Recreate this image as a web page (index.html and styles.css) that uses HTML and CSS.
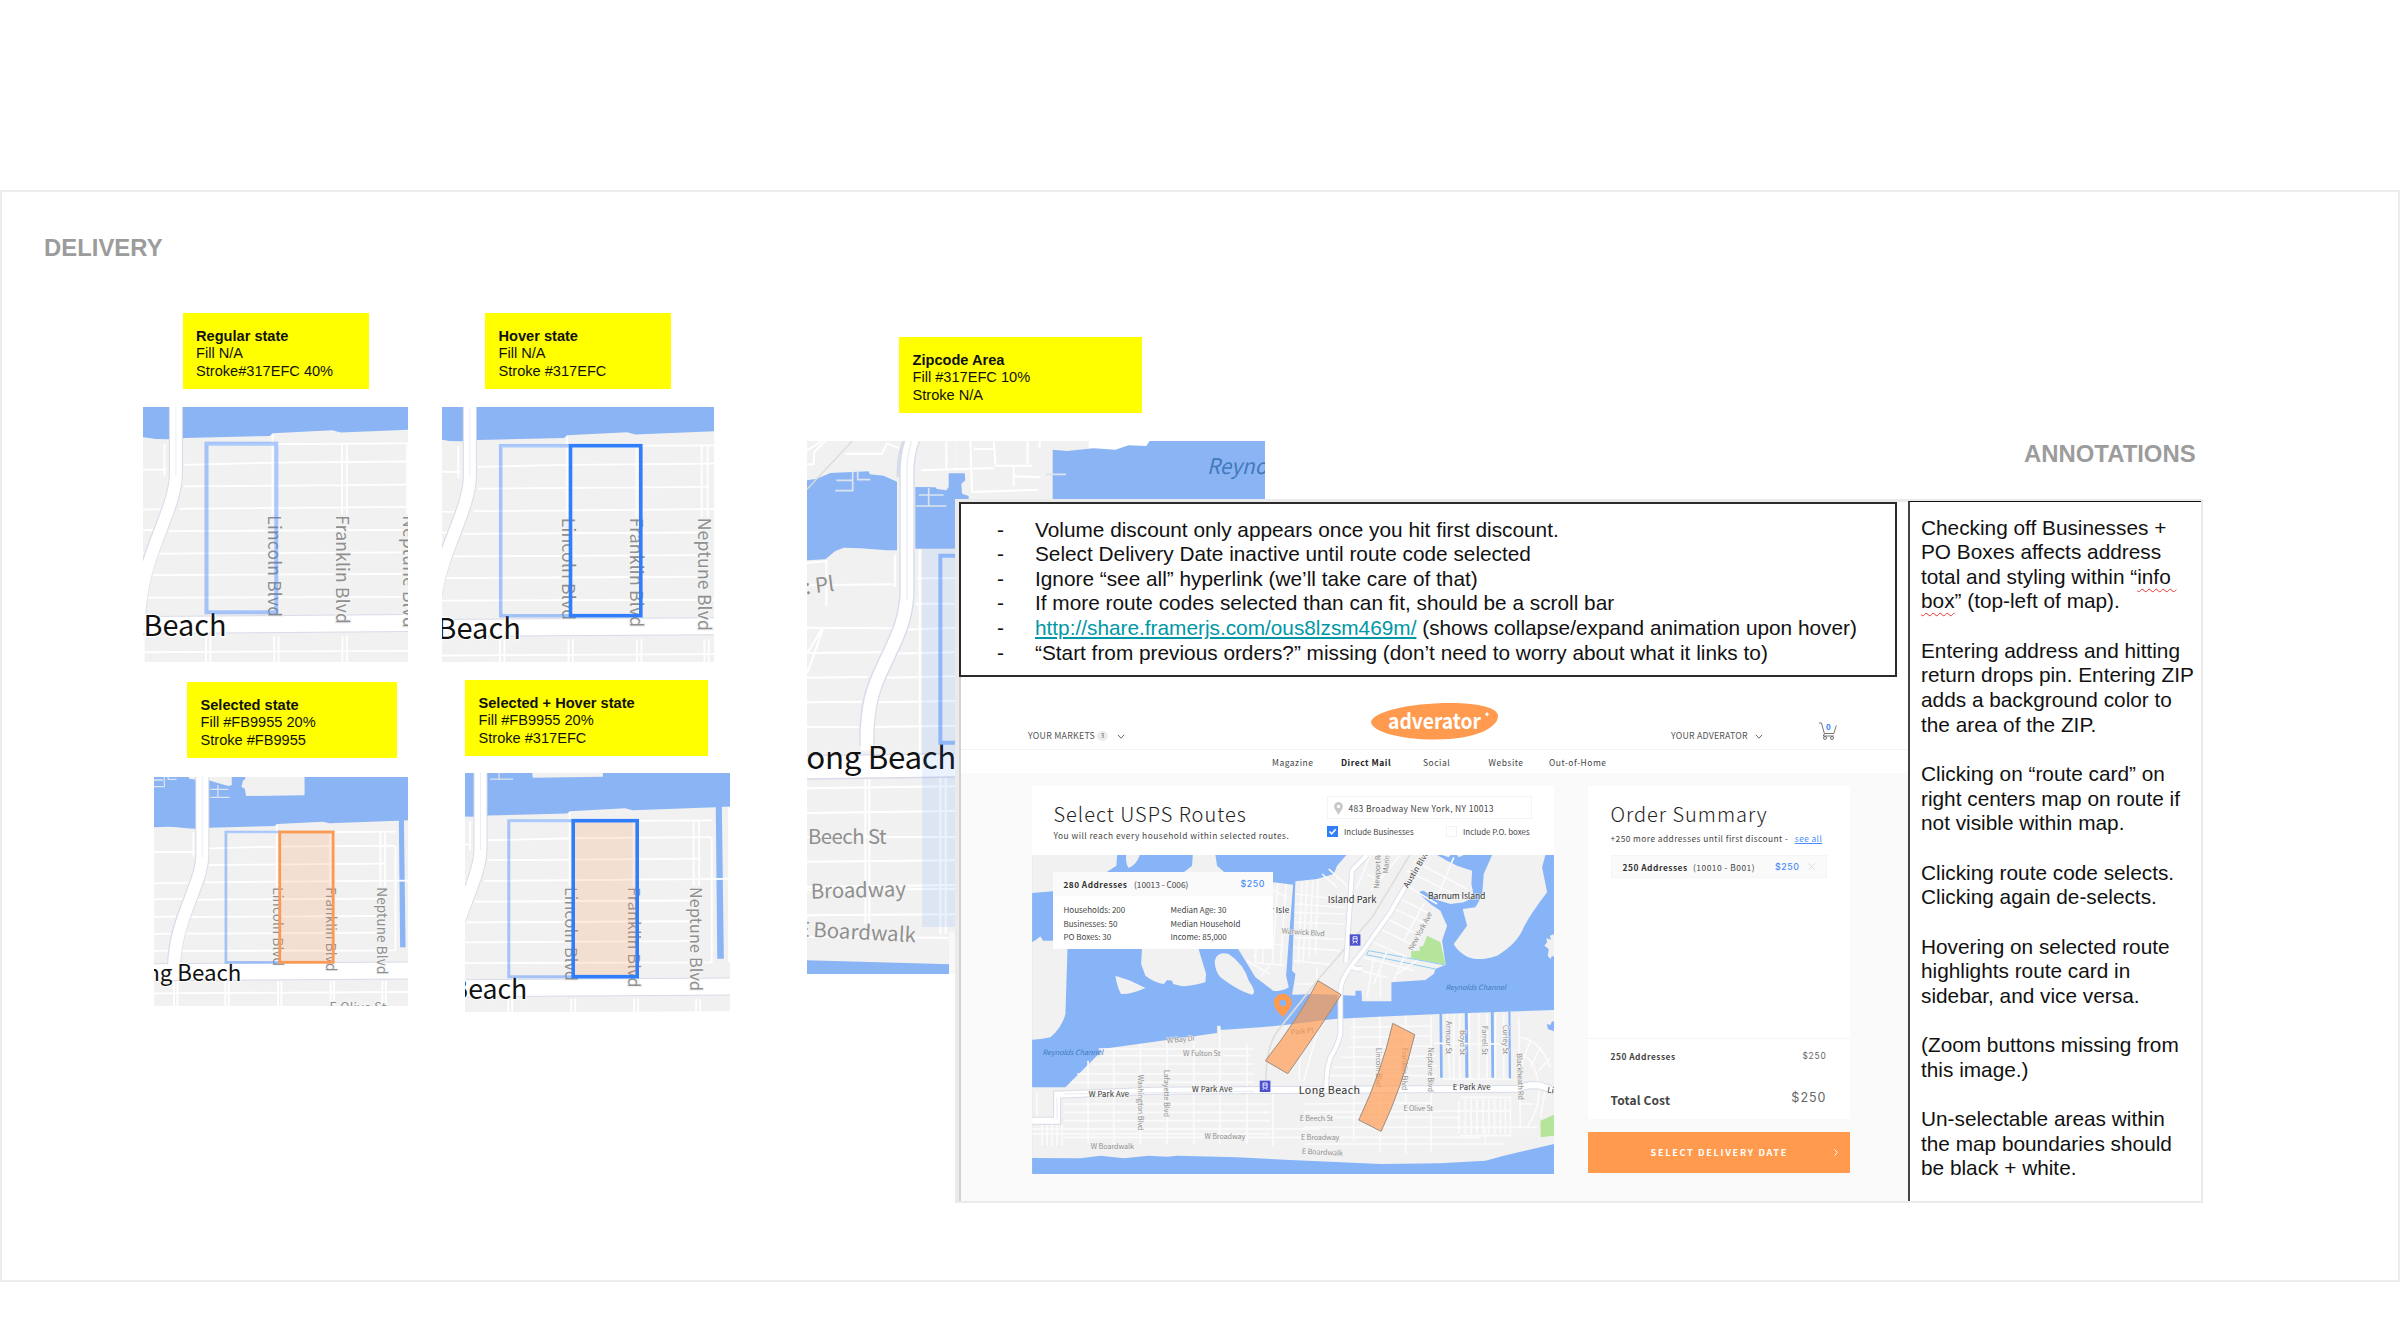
FILE: index.html
```html
<!DOCTYPE html>
<html lang="en">
<head>
<meta charset="utf-8">
<title>Delivery – annotations</title>
<link rel="stylesheet" href="styles.css">
</head>
<body>
<svg class="defs" width="0" height="0" aria-hidden="true">
  <defs>
    <symbol id="streets" overflow="visible">
      <g class="map-shapes" transform="matrix(.4209 0 0 .3333 -54 -107)">
        <rect class="land" x="0" y="200" width="900" height="1000"/>
        <path class="water" d="M100 200H800V446L740 450 708 452 545 460 530 455 420 462 415 468 258 473 228 476 205 475Q165 465 100 476Z"/>
        <path class="land" d="M345 300H486V376L347 378 344 356 336 350 340 331 345 328ZM258 300H313V345L306 348 290 343 258 331ZM205 300H232V330L212 326Z"/>
        <path class="jetty" d="M262 358H305M262 382H308M280 345V384M128 350H153V321M128 330H150M162 321V328H182"/>
        <path class="water" d="M710 448H722L726 832H713Z"/>
        <path class="street" d="M128 546H225M128 640L215 638M128 688L208 686M128 741L195 739M128 792L182 791M128 843L175 842M299 488L703 485M258 535L420 530 700 527M258 585L680 581M250 637L800 631M230 689L672 686M212 741L672 738M200 791L672 788M190 843L702 841M222 487V560M420 465V650M427 487V650M547 487V650M556 487V650M666 487V650M677 487V650M702 527V841M736 452V841M128 970L740 966"/>
        <path class="street" d="M176 932V1020M184 932V1020M298 932V1020M306 932V1020M423 932V1020M431 932V1020M548 932V1020M556 932V1020M671 932V1020M679 932V1020"/>
        <path class="case" d="M243 200V560C240 650 177 750 176 885" style="stroke-width:14"/>
        <path class="case" d="M100 907L800 901" style="stroke-width:18"/>
        <path class="road" d="M243 200V560C240 650 177 750 176 895" style="stroke-width:12"/>
        <path class="road" d="M100 907L800 901" style="stroke-width:16"/>
        <path class="vein" d="M243 300V560"/>
      </g>
      <g class="lbl">
        <text transform="translate(119 110.3) rotate(90)" font-size="13.5" textLength="78.7">Lincoln Blvd</text>
        <text transform="translate(171.6 110.3) rotate(90)" font-size="13.5" textLength="84">Franklin Blvd</text>
        <text transform="translate(223.4 110.3) rotate(90)" font-size="13.5" textLength="87">Neptune Blvd</text>
        <text x="175.4" y="235" font-size="12.5" textLength="57">E Olive St</text>
        <text class="town" x="87.4" y="203.7" font-size="22.3" text-anchor="end">Long Beach</text>
      </g>
    </symbol>
  </defs>
</svg>

<main class="board">
  <h1 class="heading heading-delivery">DELIVERY</h1>
  <h2 class="heading heading-annotations">ANNOTATIONS</h2>

  <div class="note note-regular"><b>Regular state</b><br>Fill N/A<br>Stroke#317EFC 40%</div>
  <div class="note note-hover"><b>Hover state</b><br>Fill N/A<br>Stroke #317EFC</div>
  <div class="note note-selected"><b>Selected state</b><br>Fill #FB9955 20%<br>Stroke #FB9955</div>
  <div class="note note-both"><b>Selected + Hover state</b><br>Fill #FB9955 20%<br>Stroke #317EFC</div>
  <div class="note note-zip"><b>Zipcode Area</b><br>Fill #317EFC 10%<br>Stroke N/A</div>

  <svg class="map map-regular" viewBox="0 0 265 255">
    <use href="#streets" transform="matrix(1.297 0 0 1.294 -29.7 -34.5)"/>
    <rect class="zone" x="63.5" y="36.7" width="69.8" height="168.6" style="stroke-width:4"/>
  </svg>
  <svg class="map map-hover" viewBox="0 0 272 255">
    <use href="#streets" transform="matrix(1.302 0 0 1.302 -35 -32.9)"/>
    <path class="zone" d="M128.5 38.7H58.7V208.7H128.5" style="stroke-width:3.5"/>
    <rect class="zone-hover" x="128.5" y="38.7" width="70.3" height="170"/>
  </svg>
  <svg class="map map-selected" viewBox="0 0 254 229">
    <use href="#streets"/>
    <path class="zone" d="M125.7 55H71.9V185.3H125.7"/>
    <rect class="zone-selected" x="125.7" y="55" width="53.5" height="130.3"/>
  </svg>
  <svg class="map map-both" viewBox="0 0 265.5 239">
    <use href="#streets" transform="matrix(1.197 0 0 1.197 -42.3 -18.1)"/>
    <path class="zone" d="M108.2 47.7H43.8V203.7H108.2" style="stroke-width:3"/>
    <rect class="zone-hover filled" x="108.2" y="47.7" width="64" height="156"/>
  </svg>

  <svg class="map map-zip" viewBox="80 362 1374 1600">
    <rect class="land" x="80" y="362" width="445" height="1600"/>
    <rect class="land" x="525" y="362" width="400" height="180"/>
    <path class="water" d="M80 480L110 475 150 458 265 453 268 462 310 466 350 484V690H320L240 684 190 682 165 692 135 717 80 720ZM405 500L465 501 470 506 498 510 505 500V459H553L555 480 543 490 545 520 565 527V600H525V685H405Z"/>
    <path class="water" d="M817 388L860 392 940 384 1005 388 1045 375 1098 377 1108 362H1454V600H817Z"/>
    <g class="street wide">
      <path d="M80 390L125 362M80 432H100L102 395 135 362M195 400H305L320 370 358 384M422 450L640 443M498 362V448M570 362L575 515 775 508M580 386H640M640 362L646 436H755M742 362V432M700 440V497M700 468L780 470M778 362V384"/>
      <path d="M80 728L138 722V858M80 795L340 792M80 922L345 924M80 1000L125 925M130 920L80 1060M344 705V800M410 774H525M405 850H525M370 928L525 922M330 1000L525 996M80 998L310 996M80 1072L262 1070M320 1072L525 1068M80 1146L250 1144M290 1146L525 1142M80 1220H240M280 1220L525 1216M418 686V1300M80 1404L525 1398M80 1478L525 1472M80 1550H525M80 1624L525 1620M80 1700L525 1694M80 1708L525 1706M80 1785L525 1782M80 1850L505 1852M255 1340V1810M267 1340V1810M480 1340V1840M496 1340V1840"/>
    </g>
    <path class="jetty" d="M168 480H217M165 511H217V455M232 453V478H270M415 524H490M445 503V556M407 557H498M797 462H857" style="stroke-width:5"/>
    <path d="M80 507L216 362" fill="none" stroke="#dcdcd4" stroke-width="4"/>
    <path class="case" d="M80 1308L525 1302" transform="translate(0 33)" style="stroke-width:74"/>
    <path class="road" d="M80 1308L525 1302" transform="translate(0 33)" style="stroke-width:66"/>
    <path class="case" d="M400 350Q378 400 380 470V820C376 900 350 950 322 1010 290 1080 256 1130 260 1276" style="stroke-width:46"/>
    <path class="case" d="M395 350Q370 400 372 470" style="stroke-width:46"/>
    <path class="road" d="M400 350Q378 400 380 470V820C376 900 350 950 322 1010 290 1080 256 1130 260 1290" style="stroke-width:38"/>
    <path d="M398 350Q378 400 380 470V840" fill="none" stroke="#eceef5" stroke-width="4"/>
    <path class="water" d="M80 1920L510 1932V1962H80Z"/>
    <path d="M506 1835H525V1962H506Z" fill="#f8f8f8"/>
    <g class="lbl">
      <text class="town" x="78" y="1346" font-size="94" textLength="450">ong Beach</text>
      <text transform="translate(76 822) rotate(-7)" font-size="62">: Pl</text>
      <text x="83" y="1571" font-size="61" textLength="236">Beech St</text>
      <text transform="translate(92 1735) rotate(-1.5)" font-size="61" textLength="285">Broadway</text>
      <text transform="translate(52 1848) rotate(3)" font-size="61">E</text>
      <text transform="translate(98 1850) rotate(3)" font-size="61" textLength="308">Boardwalk</text>
      <text class="sea" x="1280" y="460" font-size="64" textLength="198" lengthAdjust="spacingAndGlyphs">Reynol</text>
    </g>
    <rect x="425" y="686" width="110" height="1134" fill="#317efc" fill-opacity=".1"/>
    <path d="M540 706H480V1267H540" fill="none" stroke="#317efc" stroke-opacity=".45" stroke-width="12"/>
  </svg>

  <section class="panel">
    <div class="panel-main">
      <ul class="remarks">
        <li>Volume discount only appears once you hit first discount.</li>
        <li>Select Delivery Date inactive until route code selected</li>
        <li>Ignore “see all” hyperlink (we’ll take care of that)</li>
        <li>If more route codes selected than can fit, should be a scroll bar</li>
        <li><a href="#">http://share.framerjs.com/ous8lzsm469m/</a> (shows collapse/expand animation upon hover)</li>
        <li>“Start from previous orders?” missing (don’t need to worry about what it links to)</li>
      </ul>

      <div class="app">
        <header class="topbar">
          <div class="menu"><span class="menu-markets">YOUR MARKETS</span><span class="count">3</span>
            <svg class="chev" viewBox="0 0 8 5"><path d="M.8.8L4 4.2 7.2.8"/></svg></div>
          <svg class="logo" viewBox="0 0 127 37">
            <path d="M0 18.5C3 9 36 0 80 0 108 0 127 5 127 13 127 24 106 36.5 64 36.5 30 36.5 0 29 0 18.5Z"/>
            <text x="17" y="25.6" textLength="93" lengthAdjust="spacingAndGlyphs">adverator</text>
            <path class="star" d="M116 8.6l.9 2 1.8.6-1.8.8-.9 2-.9-2-1.8-.8 1.8-.6Z"/>
          </svg>
          <div class="menu menu-right"><span class="menu-own">YOUR ADVERATOR</span>
            <svg class="chev" viewBox="0 0 8 5"><path d="M.8.8L4 4.2 7.2.8"/></svg>
            <svg class="cart" viewBox="0 0 18 18"><path d="M0 1H2.5L5.3 11.5H14.8L17.3 3.5M5.5 11.5L4.3 14H14.8"/><circle cx="6" cy="16" r="1.5"/><circle cx="13" cy="16" r="1.5"/><text x="7" y="7.6">0</text></svg></div>
        </header>
        <nav class="tabs"><span>Magazine</span><b>Direct Mail</b><span>Social</span><span>Website</span><span>Out-of-Home</span></nav>

        <div class="content">
          <section class="card routes">
            <div class="routes-head">
              <div>
                <h3>Select USPS Routes</h3>
                <p class="sub sub-routes">You will reach every household within selected routes.</p>
              </div>
              <div class="filters">
                <div class="address"><svg viewBox="0 0 8 12"><path fill-rule="evenodd" d="M4 0A4 4 0 0 1 8 4C8 7 5 9.500 4 12 3 9.500 0 7 0 4A4 4 0 0 1 4 0ZM4 2.500A1.600 1.600 0 1 0 4 5.700 1.600 1.600 0 1 0 4 2.500Z"/></svg><span>483 Broadway New York, NY 10013</span></div>
                <div class="checks">
                  <span class="box on"><svg viewBox="0 0 11 11"><path d="M2.500 5.500L4.700 7.800 8.700 3.200"/></svg></span><span class="lab">Include Businesses</span>
                  <span class="box"></span><span class="lab">Include P.O. boxes</span>
                </div>
              </div>
            </div>
            <div class="mapwrap">
              <svg class="bigmap" viewBox="35 43 1567 957">
                <rect class="sea-fill" x="35" y="43" width="1567" height="957"/>
                <g class="land">
                  <path d="M35 43H290L288 75 258 95 240 140 35 157Z"/>
                  <path d="M35 305L50 295 60 287 68 300H142L135 520Q125 560 90 590 60 597 35 597Z"/>
                  <path d="M317 43H358Q350 70 325 82 315 70 317 43Z"/>
                  <path d="M517 43H585L590 75 612 95H490L515 75Z"/>
                  <path d="M365 320H533L557 400 555 425Q510 437 485 437L458 430 455 420 440 418 430 430Q400 425 375 405L362 370Z"/>
                  <path d="M285 405L330 420 375 442Q330 462 302 460 290 440 285 405Z"/>
                  <path d="M583 360Q590 330 625 340 670 370 685 420 710 455 695 462 660 455 600 410 583 390 583 360Z"/>
                  <path d="M650 320L740 300V122L818 132 797 405 805 440Q780 455 758 450L705 410Z"/>
                  <path d="M35 740H135L235 640 245 625 590 577V555H600V568L720 560 800 552 940 535 1075 528 1255 520 1602 508V910L1450 945 1395 960 1260 968 1080 970 810 958 650 950 470 945 440 948 385 945 310 953 240 945 180 953 35 952Z"/>
                </g>
                <g transform="translate(810 0)">
                  <path class="land" d="M15 122L80 115 130 100 140 75 168 43H440L470 60 500 75 545 90 543 130 548 155 540 175 520 185 480 190 440 178 400 150Q385 150 387 160L420 190 450 210 470 255 455 300 466 372 435 385 430 400 405 418 303 425V482H215L213 450H195V465L80 460 5 462 12 420 15 400 5 390Z"/>
                  <path class="land" d="M605 43H765L755 80 770 155Q720 220 700 260 680 310 620 345 560 365 525 345 500 330 490 310L530 255 517 205 555 200 575 165 580 100Z"/>
                  <path class="land" d="M792 280L778 285 782 297 768 293 770 305 762 315 775 325 772 345 780 355 785 345 792 350Z"/>
                  <path class="land" d="M455 43L480 43 475 50ZM500 43H520L505 50Z"/>
                  <path class="sea-fill" d="M447 515H455L457 711H449ZM523 515H532L534 711H525ZM601 512H610L611 711H603ZM654 512H660L662 714H655ZM770 550L780 553 785 541 792 545V572L772 565Z"/>
                  <path class="green" d="M410 285L450 305 466 372 362 352V332L388 330 387 318 398 316Z"/>
                  <path class="green" d="M750 840L792 822V885L751 890Z"/>
                  <path d="M435 385L228 342 235 330 465 373" fill="none" stroke="#8fcdf2" stroke-width="3"/>
                </g>
                <g class="street fine">
                  <path d="M680 360L748 400M706 365V320M727 372V326M700 366L790 374M748 375L720 408M772 130L756 372M797 132L780 372M760 150L800 170M760 310L790 314M700 350L720 300"/>
                  <path d="M845 125L833 370M860 122L848 360M877 120L866 350M893 115L885 340M825 160L975 178M825 190L975 200M823 215L975 220M822 245L972 250M820 290L972 296M820 320L960 330M820 360L935 372M830 430H900M890 380V440M905 100L950 140M925 85L985 140M1010 140L1050 43M1040 100L1080 120M1050 150L1140 43M1180 60L1340 145M1160 90L1330 175M1150 130L1250 190M1130 170L1240 225M1110 200L1220 250M1090 230L1180 275M1070 260L1170 310M1050 300L1160 350M1030 350L1180 390M1020 390L1100 410M1150 350L1120 420M1100 330L1060 430M1210 190L1150 300M1300 50L1250 170M1190 360L1130 400M1060 350L1040 470M1080 390V470"/>
                  <path d="M203 660V910M280 625V910M360 610V910M440 600V910M520 590V910M598 560V910M680 610V910M758 760V915M235 625H700M240 645H690M215 670H700M170 700H700M150 725H700M130 790H750M130 815H750M130 840H750M35 865H900M130 890H1380M35 880H750M50 755V840M65 850V915M80 850V915M95 850V915M110 850V915M125 850V915"/>
                  <path d="M1078 528V935M1156 525V940M1232 525V935M1000 535V900M860 600Q830 650 838 720M900 540L850 720M1315 780V880M990 560L1230 556M990 590L1230 586M985 620L1230 616M960 650L1250 646M940 680L1250 676M930 705L1250 705M850 790L1230 786M850 815L1470 810M850 860L1480 860M860 830H1320M850 910L1450 910M1320 770H1470V885H1320M1335 775V880M1352 775V880M1370 775V880M1388 775V880M1405 775V880M1422 775V880M1440 775V880M1455 775V880M1395 860V910"/>
                  <path d="M1280 520L1288 715M1300 520V715M1318 520V715M1346 520L1350 715M1375 520V715M1400 520V715M1425 520V715M1450 520V715M1240 608L1460 610M1265 715H1470M1495 530L1500 860M1500 590Q1560 600 1590 680M1500 640Q1540 650 1555 730M1530 600L1500 680M1560 620L1530 680M1590 650L1555 690M1555 740Q1560 800 1520 860M1500 790H1540M1575 745L1560 830M1480 860H1550"/>
                </g>
                <path d="M1168 43L1055 230 890 420 840 485 780 560Q735 610 737 720" fill="none" stroke="#dededa" stroke-width="5"/>
                <g class="case" style="stroke-width:24">
                  <path d="M35 840H110V762L400 750 1490 744Q1540 725 1575 740L1602 750"/>
                </g>
                <g class="case" style="stroke-width:17">
                  <path d="M1040 43L995 90 977 365M1165 120L1110 215 1025 335Q960 410 960 450V580Q950 620 930 650 916 690 918 740M990 375L1005 384H1025"/>
                </g>
                <path class="road" style="stroke-width:18" d="M35 840H110V762L400 750 1490 744Q1540 725 1575 740L1602 750"/>
                <path class="road" style="stroke-width:12" d="M1040 43L995 90 977 365M1165 120L1110 215 1025 335Q960 410 960 450V580Q950 620 930 650 916 690 918 745M990 375L1005 384H1025"/>
                <path d="M110 770V835M130 760L700 752" stroke="#dfe1ee" stroke-width="2" fill="none"/>
                <g class="station"><rect x="718" y="720" width="32" height="34"/><path d="M728 727H740V742H728ZM728 733H740M727 748L731 743M741 748L737 743"/></g>
                <g class="station" transform="translate(270 -439)"><rect x="718" y="720" width="32" height="34"/><path d="M728 727H740V742H728ZM728 733H740M727 748L731 743M741 748L737 743"/></g>
                <g class="lbl" font-size="22">
                  <text transform="translate(440 608) rotate(-6)" textLength="85">W Bay Dr</text>
                  <text x="488" y="645" textLength="112">W Fulton St</text>
                  <text x="552" y="894" textLength="123">W Broadway</text>
                  <text x="211" y="925" textLength="130">W Boardwalk</text>
                  <text transform="translate(352 702) rotate(90)" textLength="168">Washington Blvd</text>
                  <text transform="translate(430 687) rotate(90)" textLength="142">Lafayette Blvd</text>
                  <text transform="translate(783 278) rotate(4)" textLength="130">Warwick Blvd</text>
                  <text transform="translate(812 582) rotate(-5)" textLength="68">Park Pl</text>
                  <text transform="translate(1076 144) rotate(-87)" textLength="112">Newport Rd</text>
                  <text transform="translate(1103 99) rotate(-85)" textLength="85">Marina B</text>
                  <text transform="translate(1176 332) rotate(-62)" textLength="128">New York Ave</text>
                  <text transform="translate(1066 621) rotate(90)" textLength="120">Lincoln Blvd</text>
                  <text transform="translate(1145 621) rotate(90)" textLength="128">Franklin Blvd</text>
                  <text transform="translate(1224 620) rotate(90)" textLength="134">Neptune Blvd</text>
                  <text transform="translate(1277 541) rotate(90)" textLength="100">Armour St</text>
                  <text transform="translate(1320 568) rotate(90)" textLength="76">Boyd St</text>
                  <text transform="translate(1385 555) rotate(90)" textLength="88">Farrell St</text>
                  <text transform="translate(1449 553) rotate(90)" textLength="88">Curley St</text>
                  <text transform="translate(1489 638) rotate(88)" textLength="140">Blackheath Rd</text>
                  <text x="1149" y="811" textLength="89">E Olive St</text>
                  <text x="838" y="841" textLength="100">E Beech St</text>
                  <text x="842" y="898" textLength="115">E Broadway</text>
                  <text transform="translate(844 939) rotate(3)" textLength="123">E Boardwalk</text>
                </g>
                <g class="lbl dark" font-size="23">
                  <text x="205" y="770" textLength="121">W Park Ave</text>
                  <text x="515" y="755" textLength="121">W Park Ave</text>
                  <text x="1297" y="747" textLength="113">E Park Ave</text>
                  <text x="766" y="217" font-size="24" textLength="40">Isle</text>
                  <text x="750" y="217" font-size="24">r</text>
                  <text x="922" y="187" font-size="28" textLength="146">Island Park</text>
                  <text x="1223" y="176" font-size="26" textLength="172">Barnum Island</text>
                  <text transform="translate(1162 143) rotate(-59)" textLength="125">Austin Blvd</text>
                  <text x="835" y="760" font-size="32" textLength="184">Long Beach</text>
                  <text transform="translate(1580 755) rotate(10)">Lid</text>
                </g>
                <g class="lbl sea" font-size="22">
                  <text x="66" y="643" textLength="182">Reynolds Channel</text>
                  <text x="1275" y="449" textLength="182">Reynolds Channel</text>
                </g>
                <g class="picked">
                  <path d="M893 420L962 462Q880 590 802 699L735 660Q830 540 893 420Z"/>
                  <path d="M1117 548L1183 582Q1145 740 1082 872L1015 838Q1085 690 1117 548Z"/>
                </g>
                <path fill="#ff9a4e" fill-rule="evenodd" d="M787 459A27 27 0 0 1 814 487Q812 505 787 529 762 505 760 487A27 27 0 0 1 787 459ZM787 477A10 10 0 1 0 787 497 10 10 0 1 0 787 477Z"/>
              </svg>
              <div class="info">
                <div class="info-head"><b>280 Addresses</b><span class="code">(10013 - C006)</span><span class="price">$250</span></div>
                <div class="info-body">
                  <p>Households: 200<br>Businesses: 50<br>PO Boxes: 30</p>
                  <p>Median Age: 30<br>Median Household<br>Income: 85,000</p>
                </div>
              </div>
            </div>
          </section>

          <aside class="side">
            <section class="card order">
              <h3>Order Summary</h3>
              <p class="sub sub-order">+250 more addresses until first discount -<a href="#">see all</a></p>
              <div class="route-card"><b>250 Addresses</b><span class="code">(10010 - B001)</span><span class="price">$250</span><svg viewBox="0 0 7 7"><path d="M.5.5L6.500 6.500M6.500.5L.5 6.500"/></svg></div>
              <div class="totals">
                <div class="line"><b>250 Addresses</b><span>$250</span></div>
                <div class="line total"><b>Total Cost</b><span>$250</span></div>
              </div>
            </section>
            <button class="cta" type="button"><span>SELECT DELIVERY DATE</span><svg viewBox="0 0 4 7"><path d="M.5.5L3.400 3.500.5 6.500"/></svg></button>
          </aside>
        </div>
      </div>
    </div>

    <div class="annotations">
      <p>Checking off Businesses +<br>PO Boxes affects address<br>total and styling within “<span class="typo">info&nbsp;</span><br><span class="typo">box</span>” (top-left of map).</p>
      <p>Entering address and hitting<br>return drops pin. Entering ZIP<br>adds a background color to<br>the area of the ZIP.</p>
      <p>Clicking on “route card” on<br>right centers map on route if<br>not visible within map.</p>
      <p>Clicking route code selects.<br>Clicking again de-selects.</p>
      <p>Hovering on selected route<br>highlights route card in<br>sidebar, and vice versa.</p>
      <p>(Zoom buttons missing from<br>this image.)</p>
      <p>Un-selectable areas within<br>the map boundaries should<br>be black + white.</p>
    </div>
  </section>
</main>
</body>
</html>
```
FILE: styles.css
```css
* { box-sizing: border-box; }
body {
  margin: 0;
  width: 2400px;
  height: 1332px;
  overflow: hidden;
  background: #fff;
  color: #111;
  font-family: "Liberation Sans", Arial, sans-serif;
}
h1, h2, h3, p, ul { margin: 0; padding: 0; }
.defs { position: absolute; }

/* Slide frame; everything on it is a freely placed object */
.board {
  position: relative;
  height: 1092px;
  margin-top: 190px;
  border: 2px solid #ececec;
}
.heading, .note, .map, .panel { position: absolute; }

.heading { color: #9c9c9c; font-size: 23.900px; line-height: 28px; font-weight: bold; white-space: nowrap; }
.heading-delivery { left: 42px; top: 42px; }
.heading-annotations { left: 2022px; top: 248px; }

.note {
  height: 76px;
  padding: 14.500px 13.500px 0;
  background: #ff0;
  font-size: 14.600px;
  line-height: 17.700px;
  white-space: nowrap;
}
.note-regular { left: 180.500px; top: 121px; width: 186px; }
.note-hover { left: 483px; top: 121px; width: 186px; }
.note-selected { left: 185px; top: 490px; width: 210px; }
.note-both { left: 463px; top: 488px; width: 243px; }
.note-zip { left: 897px; top: 145px; width: 243px; }

/* Map swatches */
.map { display: block; overflow: hidden; }
.map-regular { left: 141px; top: 215px; width: 265px; height: 255px; }
.map-hover { left: 440px; top: 215px; width: 272px; height: 255px; }
.map-selected { left: 152px; top: 585px; width: 254px; height: 229px; }
.map-both { left: 462.500px; top: 581px; width: 265.500px; height: 239px; }
.map-zip { left: 805px; top: 249px; width: 458px; height: 533.300px; }

.land { fill: #f1f1f1; }
.water { fill: #8ab4f3; }
.sea-fill { fill: #87b4f7; }
.green { fill: #b5e59b; }
.street { fill: none; stroke: #fff; stroke-width: 1.800px; }
.jetty { fill: none; stroke: #dde3ec; stroke-width: 1.300px; }
.case { fill: none; stroke: #d8dbe9; }
.road { fill: none; stroke: #fff; }
.vein { fill: none; stroke: #eceef5; stroke-width: 1px; }
.map-shapes path { vector-effect: non-scaling-stroke; }
.street.wide { stroke-width: 6px; }
.street.fine { stroke: #fbfbfb; stroke-width: 5px; }
.lbl {
  font-family: "Noto Sans CJK SC", "Noto Sans", sans-serif;
  fill: #8f8f8f;
  stroke: #f4f4f4;
  stroke-width: .12em;
  paint-order: stroke;
}
.lbl .town { fill: #111; stroke: #fff; }
.lbl.dark { fill: #333; }
.lbl.sea, .lbl .sea { fill: #4279bd; stroke: none; font-style: italic; }
.zone { fill: none; stroke: #317efc; stroke-opacity: .4; stroke-width: 2.700px; }
.zone-hover { fill: none; stroke: #317efc; stroke-width: 3.600px; }
.zone-hover.filled { fill: #fb9955; fill-opacity: .2; }
.zone-selected { fill: #fb9955; fill-opacity: .2; stroke: #fb9955; stroke-width: 2.800px; }
.picked path { fill: #ff9a4e; fill-opacity: .68; stroke: #a08c80; stroke-width: 3px; }
.station rect { fill: #4a50d0; }
.station path { fill: none; stroke: #fff; stroke-width: 2.500px; }

/* Main panel */
.panel {
  left: 953px;
  top: 307px;
  width: 1248px;
  height: 704px;
  display: grid;
  grid-template-columns: 949px 1fr;
  background: #fff;
  border: solid #ebebeb;
  border-width: 3px 2px 2px 4px;
}
.panel-main { display: flex; flex-direction: column; }
.remarks {
  width: 938px;
  height: 175px;
  padding: 13.500px 0 0 36px;
  border: 2px solid #2b2b2b;
  list-style: none;
  font-size: 20.800px;
  line-height: 24.650px;
  white-space: nowrap;
}
.remarks li::before { content: "-"; display: inline-block; width: 38px; }
.remarks a { color: #0097a7; }
.annotations {
  margin-top: -1px;
  padding: 13.500px 0 0 11px;
  border: solid #111;
  border-width: 1px 0 0 2px;
  border-left-color: #444;
  font-size: 20.800px;
  line-height: 24.650px;
  white-space: nowrap;
}
.annotations p + p { margin-top: 24.650px; }
.typo { text-decoration: underline wavy #e33 1px; text-underline-offset: 4px; }

/* Application mock-up */
.app {
  flex: 1;
  border-left: 2px solid #d2d2d2;
  background: #fafafa;
  color: #444;
  font: 9px/14px "Noto Sans CJK SC", "Noto Sans", sans-serif;
  white-space: nowrap;
}
.topbar {
  display: grid;
  grid-template-columns: 1fr 127px 1fr;
  height: 73px;
  padding: 0 71px 0 67px;
  background: #fff;
  border-bottom: 1px solid #f3f3f3;
}
.menu { display: flex; align-items: center; height: 14px; margin-top: 52px; color: #555; font-size: 8.800px; }
.menu-right { justify-content: flex-end; }
.menu-markets { width: 69px; letter-spacing: .25px; }
.menu-own { width: 84px; letter-spacing: .2px; }
.count { width: 11px; height: 10px; margin-right: 8.500px; border-radius: 50%; background: #ededed; font-size: 6px; line-height: 10px; text-align: center; }
.chev { width: 8px; height: 5px; fill: none; stroke: #666; }
.logo { position: relative; left: 2px; width: 127px; height: 37px; margin-top: 26px; fill: #ff9a4e; }
.logo text { fill: #fff; font: bold 21px "Noto Sans CJK SC", "Noto Sans", sans-serif; }
.logo .star { fill: #fff; }
.cart { width: 18px; height: 18px; margin: -11px 0 0 56px; fill: none; stroke: #666; stroke-width: .9px; }
.cart text { fill: #317efc; stroke: none; font: bold 8px "Noto Sans CJK SC", sans-serif; }
.tabs {
  display: grid;
  grid-template-columns: 69px 82px 65.500px 60.500px auto;
  height: 23px;
  padding: 5px 0 0 311px;
  background: #fff;
  font-size: 8.500px;
  letter-spacing: .5px;
}
.tabs b { color: #222; }

.content { display: grid; grid-template-columns: 522.500px 261.500px; column-gap: 34px; padding: 12.500px 0 0 70.500px; }
.card { background: #fff; }
h3 { font-size: 20px; line-height: 24px; font-weight: 300; letter-spacing: 1px; color: #222; }
.sub { font-size: 8.400px; color: #444; }
.sub-routes { margin-top: 2px; letter-spacing: .47px; }
.sub-order { margin-top: 5px; margin-bottom: -.5px; letter-spacing: .43px; }
.sub a { margin-left: 6.500px; color: #4a8cf7; letter-spacing: .4px; }

.routes-head { display: flex; justify-content: space-between; height: 69px; padding: 16px 22.500px 0 22px; }
.filters { width: 205px; margin-top: -5.500px; }
.address { display: flex; align-items: center; height: 23px; padding: 1px 0 0 6px; border: 1px solid #f4f4f4; font-size: 8.500px; letter-spacing: .33px; }
.address svg { width: 9px; height: 13px; margin-right: 6px; fill: #c8c8c8; }
.checks { display: grid; grid-template-columns: 11px 108px 11px auto; align-items: center; margin-top: 5px; }
.box { width: 11px; height: 11px; border: 1px solid #f2f2f2; }
.box.on { border: 0; background: #317efc; }
.box svg { display: block; fill: none; stroke: #fff; stroke-width: 1.500px; }
.lab { padding: .5px 0 0 6.500px; font-size: 7.900px; }

.mapwrap { position: relative; height: 319px; }
.bigmap { display: block; width: 522.500px; height: 319px; }
.info {
  position: absolute;
  left: 21px;
  top: 17px;
  width: 220.500px;
  height: 77px;
  background: #fff;
}
.info-head { display: flex; align-items: center; height: 24.500px; padding: 1px 8px 0 11px; background: #fafafa; }
.info-head b { width: 70.500px; font-size: 8.300px; letter-spacing: .45px; color: #333; }
.info-head .code { font-size: 8.300px; }
.price { margin-left: auto; color: #4a8cf7; font: 500 8.800px/14px Inter, Roboto, sans-serif; letter-spacing: .6px; }
.info-body { display: grid; grid-template-columns: 107px auto; padding: 7px 0 0 11px; font-size: 8px; line-height: 13.600px; }

.order { display: flex; flex-direction: column; height: 333.500px; padding: 16px 23px 0 22.500px; }
.route-card { display: flex; align-items: center; height: 23px; margin-top: 11px; padding: 0 11px; background: #fafafa; border: 1px solid #f5f5f5; font-size: 8.400px; }
.route-card b { width: 70.500px; letter-spacing: .5px; color: #333; }
.route-card .code { letter-spacing: .5px; }
.route-card svg { width: 7px; height: 7px; margin-left: 8px; fill: none; stroke: #ddd; }
.totals { margin: auto -23px 0 -22.500px; height: 81px; padding: 9.500px 23px 0 22.500px; border-top: 1px solid #f5f5f5; }
.line { display: flex; justify-content: space-between; font-size: 8.400px; letter-spacing: .5px; }
.line span { font-family: Inter, Roboto, sans-serif; color: #666; letter-spacing: .8px; }
.line.total { margin-top: 28.500px; font-size: 12px; line-height: 18px; letter-spacing: .15px; }
.line.total span { margin-top: -2px; font-size: 12.500px; letter-spacing: 1px; }
.cta {
  display: flex;
  align-items: center;
  justify-content: space-between;
  width: 262px;
  height: 41px;
  margin-top: 12.500px;
  padding: 0 12px 0 62.500px;
  border: 0;
  background: #ff9a4e;
  color: #fff;
  font: bold 9.200px/14px "Noto Sans CJK SC", "Noto Sans", sans-serif;
  letter-spacing: 1.650px;
}
.cta svg { width: 4px; height: 7px; fill: none; stroke: #fff; }
```
